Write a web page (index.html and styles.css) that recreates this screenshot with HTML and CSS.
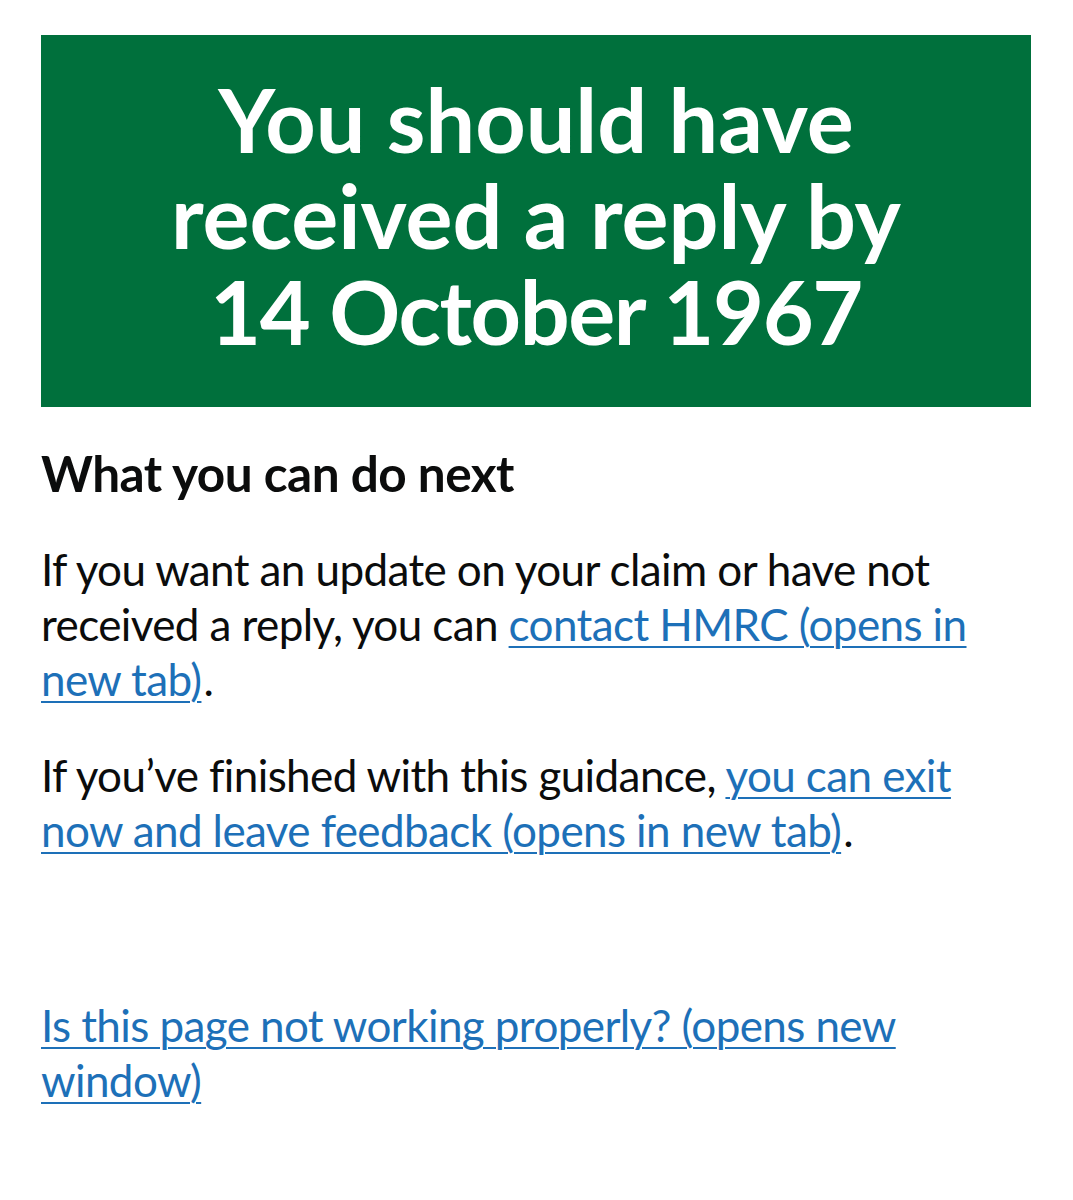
FILE: index.html
```html
<!DOCTYPE html>
<html lang="en">
<head>
    <meta charset="UTF-8">
    <meta name="viewport" content="width=device-width, initial-scale=1.0">
    <title>Reply date</title>
    <link rel="stylesheet" href="styles.css">
</head>
<body>
    <main class="container">
        <div class="panel">
            <h1 class="panel-title">You should have received a reply by <span class="panel-date">14 October 1967</span></h1>
        </div>

        <h2 class="heading">What you can do next</h2>

        <p class="body">If you want an update on your claim or have not received a reply, you can <a class="link" href="#">contact HMRC (opens in new tab)</a><span class="stop">.</span></p>

        <p class="body">If you’ve finished with this guidance, <a class="link" href="#">you can exit now and leave feedback (opens in new tab)</a><span class="stop">.</span></p>

        <p class="body problem"><a class="link" href="#">Is this page not working properly? (opens new window)</a></p>
    </main>
</body>
</html>
```

FILE: styles.css
```css
* {
    margin: 0;
    padding: 0;
    box-sizing: border-box;
}

body {
    background: #ffffff;
    color: #0b0c0c;
    font-family: Lato, "Noto Sans", sans-serif;
}

.container {
    padding: 35px 42px 60px 41px;
}

.panel {
    background: #00703c;
    color: #ffffff;
    text-align: center;
    padding: 36px 20px 48px;
}

.panel-title {
    font-size: 88px;
    line-height: 96px;
    font-weight: 700;
}

.panel-date {
    display: block;
    letter-spacing: -1.4px;
}

.heading {
    font-size: 49.5px;
    line-height: 55px;
    font-weight: 700;
    letter-spacing: -0.5px;
    margin-top: 39px;
    margin-bottom: 41px;
}

.body {
    font-size: 44px;
    line-height: 55px;
    letter-spacing: -0.6px;
    margin-bottom: 41px;
}

.problem {
    margin-top: 140px;
}

.link {
    color: #1d70b8;
    text-decoration: underline;
    text-decoration-thickness: 2px;
    text-underline-offset: 5px;
}

.stop {
    padding-left: 2px;
}
```
